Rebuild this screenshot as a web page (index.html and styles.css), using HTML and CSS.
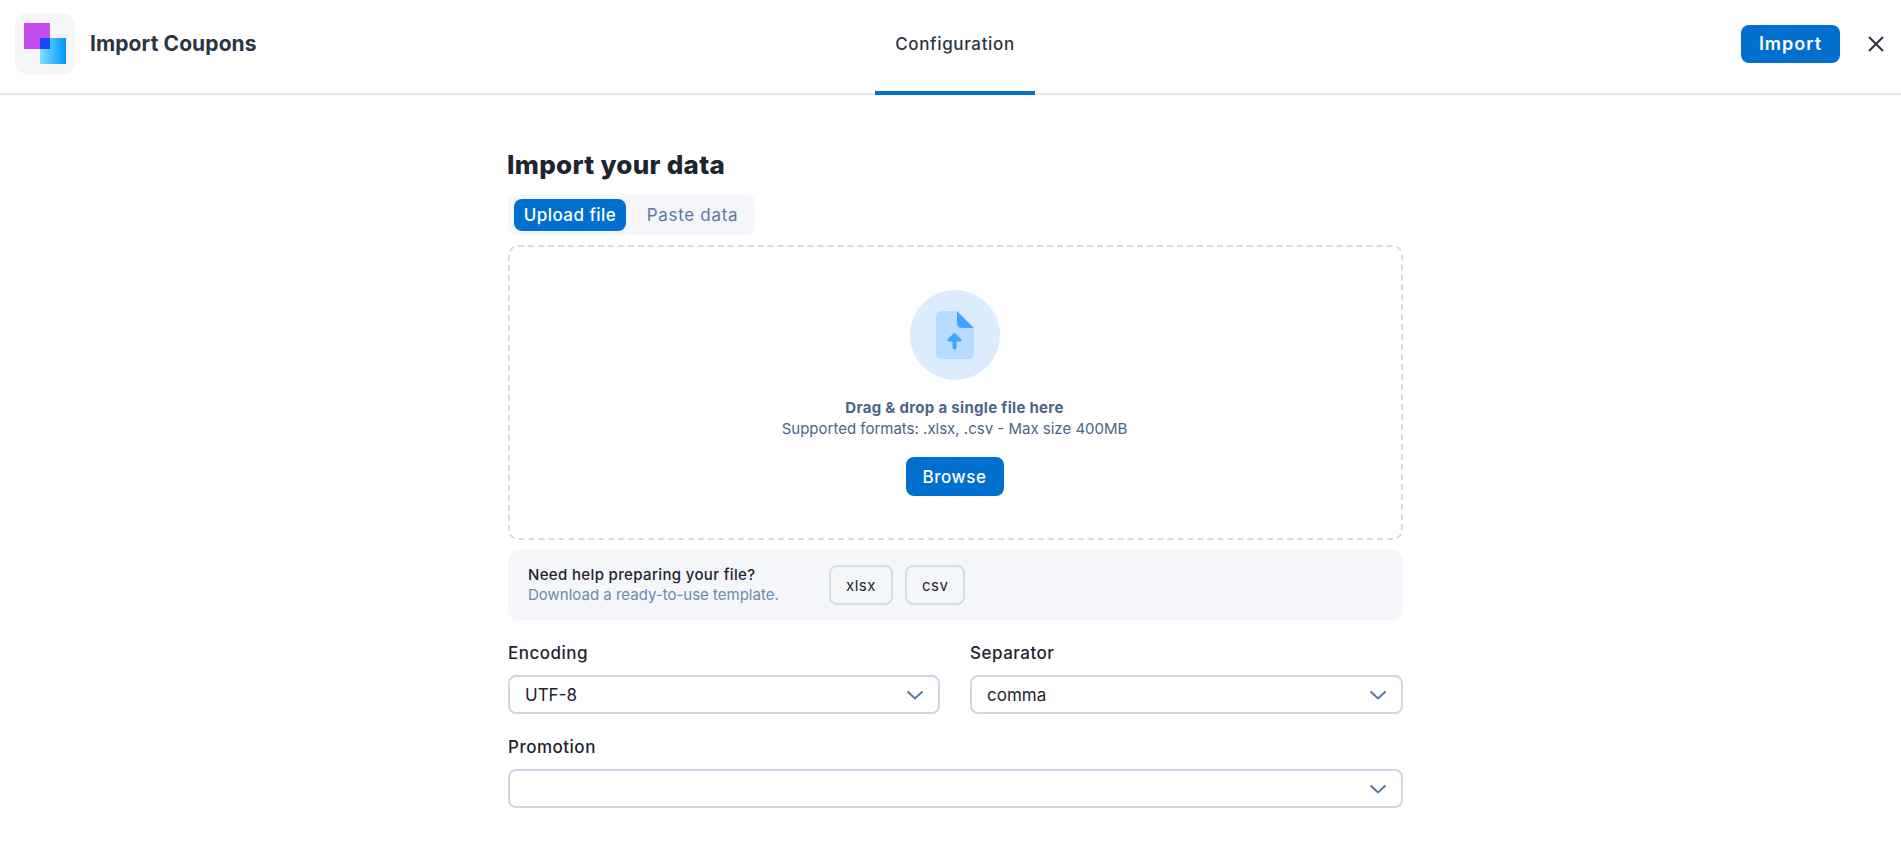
FILE: index.html
```html
<!DOCTYPE html>
<html lang="en">
<head>
<meta charset="utf-8">
<title>Import Coupons</title>
<link rel="stylesheet" href="styles.css">
</head>
<body>
<header class="topbar">
  <div class="brand">
    <div class="logo-tile">
      <svg width="60" height="60" viewBox="0 0 60 60">
        <defs><linearGradient id="g" x1="0" x2="1" y1="0" y2="0"><stop offset="0" stop-color="#7be3fb"/><stop offset="1" stop-color="#0094ff"/></linearGradient></defs>
        <rect x="9" y="9" width="26" height="26" fill="#c44df0"/>
        <rect x="25" y="24" width="26" height="26" fill="url(#g)"/>
        <rect x="25" y="24" width="10" height="11" fill="#1746fb"/>
      </svg>
    </div>
    <span class="brand-title">Import Coupons</span>
  </div>
  <nav class="steps"><span class="step">Configuration</span></nav>
  <div class="actions">
    <button class="btn btn-import">Import</button>
    <svg class="close" width="18" height="18" viewBox="0 0 18 18"><path d="M2 2 16 16M16 2 2 16" stroke="#2b3543" stroke-width="2" fill="none"/></svg>
  </div>
</header>
<main class="content">
  <h1 class="heading">Import your data</h1>
  <div class="tabs">
    <span class="tab tab-active">Upload file</span>
    <span class="tab">Paste data</span>
  </div>
  <section class="dropzone">
    <div class="drop-icon">
      <svg width="38" height="48" viewBox="0 0 38 48">
        <path d="M6 0H21V12Q21 17 26 17H38V42Q38 48 32 48H6Q0 48 0 42V6Q0 0 6 0Z" fill="#b8dcff"/>
        <path d="M21 0 38 17H26Q21 17 21 12Z" fill="#3ea6ff"/>
        <path d="M18.500 36.500V27" stroke="#3ea6ff" stroke-width="4" stroke-linecap="round" fill="none"/>
        <path d="M18.500 23.500 24 29H13Z" fill="#3ea6ff" stroke="#3ea6ff" stroke-width="3" stroke-linejoin="round"/>
      </svg>
    </div>
    <p class="drop-title">Drag &amp; drop a single file here</p>
    <p class="drop-sub">Supported formats: .xlsx, .csv - Max size 400MB</p>
    <button class="btn btn-browse">Browse</button>
  </section>
  <section class="help">
    <div class="help-text">
      <div class="help-title">Need help preparing your file?</div>
      <div class="help-sub">Download a ready-to-use template.</div>
    </div>
    <button class="chip">xlsx</button>
    <button class="chip">csv</button>
  </section>
  <div class="form-row">
    <div class="field">
      <label class="label">Encoding</label>
      <div class="select"><span>UTF-8</span><svg width="18" height="10" viewBox="0 0 18 10"><path d="M1.500 1.500 9 8.500 16.500 1.500" stroke="#557799" stroke-width="2" fill="none"/></svg></div>
    </div>
    <div class="field">
      <label class="label">Separator</label>
      <div class="select"><span>comma</span><svg width="18" height="10" viewBox="0 0 18 10"><path d="M1.500 1.500 9 8.500 16.500 1.500" stroke="#557799" stroke-width="2" fill="none"/></svg></div>
    </div>
  </div>
  <div class="field field-last">
    <label class="label">Promotion</label>
    <div class="select"><span></span><svg width="18" height="10" viewBox="0 0 18 10"><path d="M1.500 1.500 9 8.500 16.500 1.500" stroke="#557799" stroke-width="2" fill="none"/></svg></div>
  </div>
</main>
</body>
</html>
```
FILE: styles.css
```css
* { box-sizing: border-box; }
html, body { margin: 0; height: 100%; }
body {
  background: #fff;
  color: #1e2530;
  font-family: "Inter", "Noto Sans", sans-serif;
  overflow: hidden;
}
.topbar {
  height: 95px;
  border-bottom: 2px solid #e3e8ee;
  display: grid;
  grid-template-columns: 1fr auto 1fr;
  align-items: center;
  padding: 0 16px 0 15px;
}
.brand { display: flex; align-items: center; gap: 15px; margin-top: -8px; }
.logo-tile { width: 60px; height: 60px; border-radius: 10px; background: #f4f6fa; }
.logo-tile svg { display: block; }
.brand-title { font-size: 21px; font-weight: 700; color: #2b3543; letter-spacing: 0.1px; }
.steps { height: 95px; margin-left: 10px; }
.step {
  display: flex;
  justify-content: center;
  width: 160px;
  height: 95px;
  padding-top: 32px;
  border-bottom: 4px solid #006fce;
  font-size: 17px;
  font-weight: 500;
  color: #2b3543;
  line-height: 24px;
  letter-spacing: 0.65px;
}
.actions { display: flex; justify-content: flex-end; align-items: center; gap: 27px; margin-top: -8px; }
.btn {
  border: 0;
  border-radius: 8px;
  background: #006fce;
  color: #fff;
  font-family: inherit;
  font-weight: 600;
  font-size: 17px;
}
.btn-import { width: 99px; height: 38px; font-size: 18px; letter-spacing: 1px; }
.close { display: block; }
.content {
  width: 895px;
  margin-left: 508px;
  padding-top: 52px;
}
.heading { margin: 0 0 0 -1px; font-size: 26px; line-height: 36px; font-weight: 800; color: #1e2530; letter-spacing: 0.3px; }
.tabs {
  display: inline-flex;
  align-items: center;
  gap: 10px;
  margin-top: 12px;
  height: 40px;
  width: 247px;
  padding: 0 6px;
  border-radius: 8px;
  background: #f4f6fa;
  vertical-align: top;
}
.tab { height: 32px; line-height: 32px; padding: 0 10px; font-size: 17px; color: #5c7a9c; white-space: nowrap; flex: 1; text-align: center; letter-spacing: 0.7px; }
.tab-active { background: #006fce; color: #fff; border-radius: 8px; font-weight: 500; flex: none; width: 112px; padding: 0; letter-spacing: 0.45px; }
.dropzone {
  margin-top: 10px;
  height: 295px;
  border: 2px dashed #d3dce8;
  border-radius: 10px;
  display: flex;
  flex-direction: column;
  align-items: center;
  padding: 43px 2px 0 0;
}
.drop-icon {
  width: 90px;
  height: 90px;
  border-radius: 50%;
  background: #dcecff;
  display: flex;
  align-items: center;
  justify-content: center;
  margin-bottom: 17px;
}
.drop-title { margin: 0; font-size: 15px; line-height: 21px; font-weight: 700; color: #4d6585; letter-spacing: 0.3px; }
.drop-sub { margin: 0; font-size: 15px; line-height: 21px; color: #4d6585; }
.btn-browse { margin-top: 18px; width: 98px; height: 39px; font-weight: 500; letter-spacing: 0.6px; }
.help {
  margin-top: 10px;
  height: 70px;
  border-radius: 10px;
  background: #f4f6fa;
  display: flex;
  align-items: center;
  padding-left: 20px;
  gap: 12px;
}
.help-text { width: 289px; }
.help-title { font-size: 15px; line-height: 20px; font-weight: 500; color: #1e2530; letter-spacing: 0.35px; }
.help-sub { font-size: 15px; line-height: 20px; color: #6c8bab; }
.chip {
  height: 40px;
  padding: 0 15px;
  border: 2px solid #d3dce8;
  border-radius: 8px;
  background: #f4f6fa;
  color: #1e2530;
  font-family: inherit;
  font-size: 15px;
  letter-spacing: 0.5px;
}
.form-row { display: grid; grid-template-columns: 432px 433px; gap: 30px; margin-top: 21px; }
.field { display: flex; flex-direction: column; }
.field-last { margin-top: 21px; }
.label { font-size: 17px; line-height: 24px; font-weight: 500; color: #1e2530; margin-bottom: 10px; letter-spacing: 0.5px; }
.select {
  height: 39px;
  border: 2px solid #cbd7e5;
  border-radius: 8px;
  display: flex;
  align-items: center;
  justify-content: space-between;
  padding: 0 14px 0 15px;
  font-size: 17px;
  color: #1e2530;
  background: #fff;
}
```
